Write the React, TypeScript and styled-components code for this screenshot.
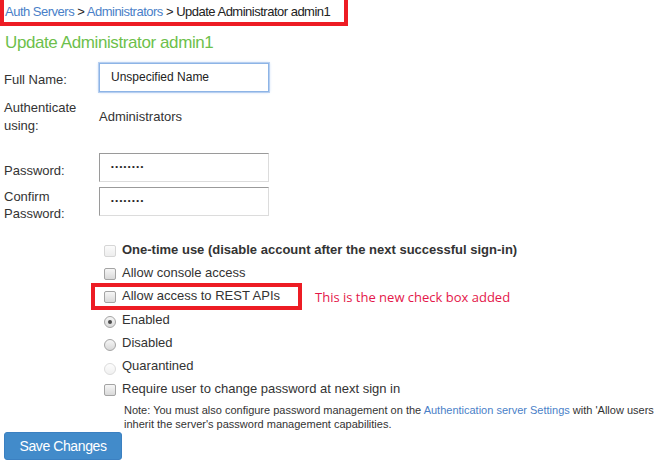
import React from 'react';
import styled, { createGlobalStyle } from 'styled-components';

const GlobalStyle = createGlobalStyle`
  html, body {
    margin: 0;
    padding: 0;
    background: #fff;
  }
  body {
    font-family: "Liberation Sans", Arial, sans-serif;
    color: #333;
  }
`;

const Page = styled.div`
  width: 655px;
  height: 474px;
  overflow: hidden;
`;

const Crumbs = styled.div`
  box-sizing: border-box;
  width: 348px;
  height: 26px;
  border: 4px solid #ed1c24;
  border-top: none;
  padding: 2px 0 0 1px;
  font-size: 13px;
  line-height: 20px;
  letter-spacing: -0.5px;
  color: #222;

  a {
    color: #4a7fc8;
    text-decoration: none;
  }
`;

const Title = styled.h1`
  margin: 7px 0 0 5px;
  font-size: 17px;
  font-weight: normal;
  color: #6dbf4c;
  letter-spacing: -0.4px;
  line-height: 20px;
`;

const Form = styled.div`
  margin: 10px 0 0 4px;
  font-size: 13px;
`;

const FieldRow = styled.div<{ $top?: number }>`
  display: grid;
  grid-template-columns: 95px 1fr;
  align-items: start;
  margin-top: ${(p) => p.$top ?? 0}px;
`;

const Label = styled.div<{ $pad?: number; $lh?: number }>`
  padding-top: ${(p) => p.$pad ?? 0}px;
  line-height: ${(p) => p.$lh ?? 17}px;
`;

const Value = styled.div`
  line-height: 36px;
`;

const TextInput = styled.div<{ $focused?: boolean }>`
  width: 170px;
  height: 29px;
  box-sizing: border-box;
  border: 1px solid ${(p) => (p.$focused ? '#8db4e6' : '#dcdcdc')};
  border-top-color: ${(p) => (p.$focused ? '#8db4e6' : '#9a9a9a')};
  border-left-color: ${(p) => (p.$focused ? '#8db4e6' : '#9a9a9a')};
  box-shadow: ${(p) => (p.$focused ? '0 0 0 1px #b7cff0, 0 0 3px #a9c8f0' : 'none')};
  padding: 0 0 2px 11px;
  display: flex;
  align-items: center;
  font-size: 12px;
  color: #222;
`;

const Dots = styled.span`
  font-size: 8px;
  letter-spacing: 1.4px;
  line-height: 1;
  color: #222;
`;

const Options = styled.div`
  margin: 16px 0 0 104px;
  display: flex;
  flex-direction: column;
  font-size: 13px;
`;

const OptionRow = styled.div`
  position: relative;
  display: flex;
  align-items: center;
  gap: 6px;
  height: 23.2px;
  color: #333;
`;

const Box = styled.span<{ $disabled?: boolean }>`
  width: 12px;
  height: 12px;
  box-sizing: border-box;
  border: 1px solid ${(p) => (p.$disabled ? '#d6d6d6' : '#a4a4a4')};
  border-radius: 2px;
  background: ${(p) =>
    p.$disabled ? 'linear-gradient(#fbfbfb, #ededed)' : 'linear-gradient(#f6f6f6, #d9d9d9)'};
  flex: none;
  margin-top: 2px;
`;

const Radio = styled.span<{ $checked?: boolean; $disabled?: boolean }>`
  width: 12px;
  height: 12px;
  box-sizing: border-box;
  border-radius: 50%;
  border: 1px solid ${(p) => (p.$disabled ? '#dcdcdc' : '#a4a4a4')};
  background: ${(p) =>
    p.$disabled ? 'linear-gradient(#fdfdfd, #f0f0f0)' : 'linear-gradient(#f6f6f6, #d8d8d8)'};
  flex: none;
  margin-top: 6px;
  display: flex;
  align-items: center;
  justify-content: center;

  &::after {
    content: '';
    display: ${(p) => (p.$checked ? 'block' : 'none')};
    width: 4px;
    height: 4px;
    border-radius: 50%;
    background: #4a4a4a;
  }
`;

const Highlight = styled.span`
  position: absolute;
  left: -13px;
  top: -1px;
  width: 211px;
  height: 27px;
  box-sizing: border-box;
  border: 4px solid #ed1c24;
  pointer-events: none;
`;

const Annotation = styled.span`
  position: absolute;
  left: 211px;
  top: 50%;
  transform: translateY(-45%);
  white-space: nowrap;
  font-family: "Open Sans", sans-serif;
  font-size: 13px;
  color: #e4174a;
`;

const Note = styled.div`
  margin: 3px 0 0 124px;
  font-size: 11px;
  line-height: 14px;
  color: #333;
  white-space: nowrap;

  a {
    color: #4a7fc8;
    text-decoration: none;
  }
`;

const SaveButton = styled.button`
  display: block;
  margin: 1px 0 0 4px;
  width: 118px;
  height: 28px;
  border: 1px solid #3b80c1;
  border-radius: 3px;
  background: #428bca;
  color: #fff;
  font-family: "Liberation Sans", Arial, sans-serif;
  font-size: 14px;
  letter-spacing: -0.4px;
  padding: 0;
  cursor: pointer;
`;

const App: React.FC = () => {
  return (
    <Page>
      <GlobalStyle />
      <Crumbs>
        <a href="#">Auth Servers</a> &gt; <a href="#">Administrators</a> &gt; Update Administrator admin1
      </Crumbs>
      <Title>Update Administrator admin1</Title>

      <Form>
        <FieldRow>
          <Label $pad={8}>Full Name:</Label>
          <TextInput $focused>Unspecified Name</TextInput>
        </FieldRow>

        <FieldRow $top={7}>
          <Label $lh={18}>
            Authenticate
            <br />
            using:
          </Label>
          <Value>Administrators</Value>
        </FieldRow>

        <FieldRow $top={18}>
          <Label $pad={9}>Password:</Label>
          <TextInput>
            <Dots>••••••••</Dots>
          </TextInput>
        </FieldRow>

        <FieldRow $top={5}>
          <Label $pad={1}>
            Confirm
            <br />
            Password:
          </Label>
          <TextInput>
            <Dots>••••••••</Dots>
          </TextInput>
        </FieldRow>
      </Form>

      <Options>
        <OptionRow>
          <Box $disabled />
          <b>One-time use (disable account after the next successful sign-in)</b>
        </OptionRow>
        <OptionRow>
          <Box />
          Allow console access
        </OptionRow>
        <OptionRow>
          <Box />
          Allow access to REST APIs
          <Highlight />
          <Annotation>This is the new check box added</Annotation>
        </OptionRow>
        <OptionRow>
          <Radio $checked />
          Enabled
        </OptionRow>
        <OptionRow>
          <Radio />
          Disabled
        </OptionRow>
        <OptionRow>
          <Radio $disabled />
          Quarantined
        </OptionRow>
        <OptionRow>
          <Box />
          Require user to change password at next sign in
        </OptionRow>
      </Options>

      <Note>
        Note: You must also configure password management on the{' '}
        <a href="#">Authentication server Settings</a> with 'Allow users
        <br />
        inherit the server's password management capabilities.
      </Note>

      <SaveButton>Save Changes</SaveButton>
    </Page>
  );
};

export default App;
